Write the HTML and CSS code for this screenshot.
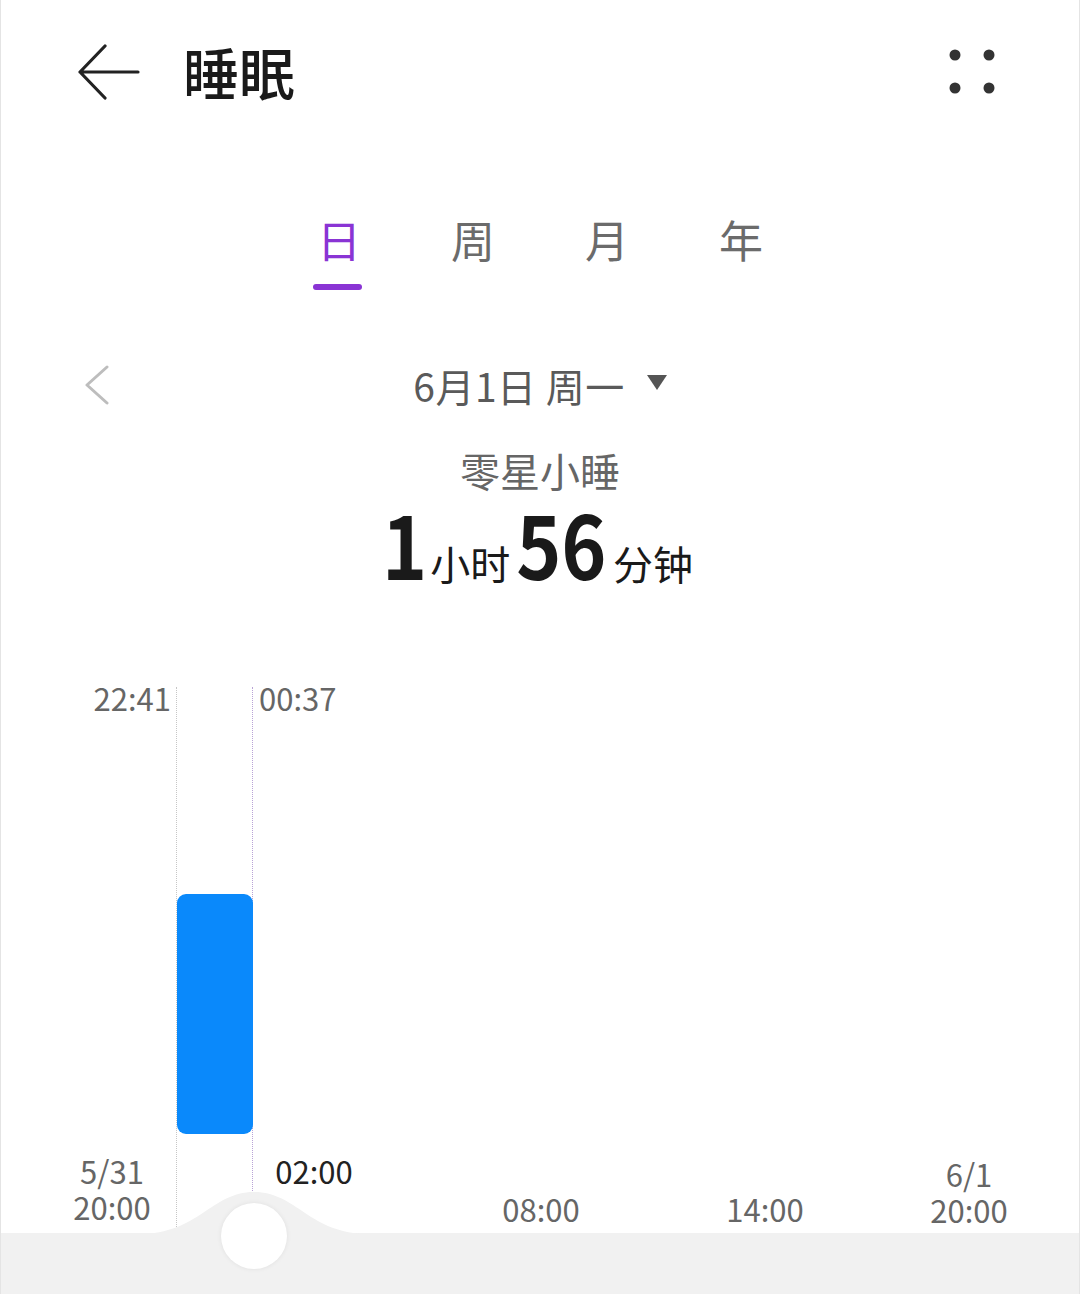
FILE: index.html
```html
<!DOCTYPE html>
<html lang="zh-CN">

<head>
    <meta charset="UTF-8">
    <meta name="viewport" content="width=device-width, initial-scale=1.0">
    <title>睡眠</title>
    <link rel="stylesheet" href="styles.css">
</head>

<body>
    <div class="screen">
        <header class="topbar">
            <svg class="back" width="62" height="56" viewBox="0 0 62 56">
                <path d="M27 2 L2 28 L27 54 M2 28 H60" fill="none" stroke="#222" stroke-width="3.2" stroke-linecap="round" stroke-linejoin="round"/>
            </svg>
            <h1 class="title">睡眠</h1>
            <svg class="more" width="46" height="46" viewBox="0 0 46 46">
                <circle cx="6" cy="6" r="5.5" fill="#333"/>
                <circle cx="40" cy="6" r="5.5" fill="#333"/>
                <circle cx="6" cy="39" r="5.5" fill="#333"/>
                <circle cx="40" cy="39" r="5.5" fill="#333"/>
            </svg>
        </header>

        <nav class="tabs">
            <div class="tab active">日<span class="underline"></span></div>
            <div class="tab">周</div>
            <div class="tab">月</div>
            <div class="tab">年</div>
        </nav>

        <div class="date-row">
            <svg class="prev" width="26" height="40" viewBox="0 0 26 40">
                <path d="M23 2 L3 20 L23 38" fill="none" stroke="#bdbdbd" stroke-width="3" stroke-linecap="round" stroke-linejoin="round"/>
            </svg>
            <div class="date">6月1日 周一<span class="caret"></span></div>
        </div>

        <div class="summary">
            <div class="kind">零星小睡</div>
            <div class="total">
                <span class="num">1</span><span class="unit">小时</span><span class="num">56</span><span class="unit">分钟</span>
            </div>
        </div>

        <div class="chart">
            <div class="vline start"></div>
            <div class="vline end"></div>
            <div class="mark start-label">22:41</div>
            <div class="mark end-label">00:37</div>
            <div class="nap-bar"></div>

            <div class="axis a1"><div>5/31</div><div>20:00</div></div>
            <div class="axis a2"><div>02:00</div></div>
            <div class="axis a3"><div>08:00</div></div>
            <div class="axis a4"><div>14:00</div></div>
            <div class="axis a5"><div>6/1</div><div>20:00</div></div>
        </div>

        <div class="scrubber">
            <svg class="bump" width="240" height="44" viewBox="0 0 240 44">
                <path d="M0 44 C60 44 72 2 115 2 C158 2 170 44 230 44 Z" fill="#f1f1f1"/>
            </svg>
            <div class="knob"></div>
        </div>
    </div>
</body>

</html>
```

FILE: styles.css
```css
body {
    margin: 0;
    background: #fff;
    font-family: "Noto Sans CJK SC", "Noto Sans", sans-serif;
    color: #222;
}

.screen {
    width: 1080px;
    height: 1294px;
    box-sizing: border-box;
    border-left: 1px solid #e4e4e4;
    border-right: 1px solid #e4e4e4;
    overflow: hidden;
    display: flex;
    flex-direction: column;
}

/* top bar */
.topbar {
    height: 145px;
    flex-shrink: 0;
    display: flex;
    align-items: center;
    padding: 0 84px 0 77px;
}

.back {
    margin-top: -2px;
}

.title {
    margin: 0 0 0 43px;
    font-size: 56px;
    font-weight: 500;
    color: #1a1a1a;
    flex: 1;
    line-height: 1;
    margin-top: -4px;
}

.more {
    margin-top: -2px;
}

/* day / week / month / year */
.tabs {
    display: flex;
    justify-content: center;
    margin-top: 68px;
    flex-shrink: 0;
}

.tab {
    width: 134px;
    text-align: center;
    font-size: 44px;
    line-height: 52px;
    color: #6b6b6b;
    position: relative;
    height: 77px;
}

.tab.active {
    color: #8a34d4;
}

.underline {
    position: absolute;
    left: 41px;
    top: 71px;
    width: 49px;
    height: 6px;
    border-radius: 3px;
    background: #8a34d4;
}

/* date selector */
.date-row {
    height: 60px;
    margin-top: 65px;
    flex-shrink: 0;
    display: flex;
    align-items: center;
    padding-left: 83px;
}

.date {
    flex: 1;
    display: flex;
    align-items: center;
    justify-content: center;
    font-size: 39px;
    color: #5a5a5a;
    margin-right: 109px;
    letter-spacing: 0.5px;
}

.caret {
    width: 0;
    height: 0;
    margin-left: 22px;
    margin-top: -6px;
    border-left: 10px solid transparent;
    border-right: 10px solid transparent;
    border-top: 15px solid #555;
}

/* summary */
.summary {
    text-align: center;
    margin-top: 31px;
    flex-shrink: 0;
}

.kind {
    font-size: 40px;
    line-height: 48px;
    color: #666;
}

.total {
    display: flex;
    justify-content: center;
    align-items: baseline;
    height: 96px;
    color: #1a1a1a;
}

.num {
    font-size: 87px;
    line-height: 96px;
    font-weight: 700;
    display: inline-block;
    transform: scaleX(0.88);
    margin: 0 -4px;
}

.unit {
    font-size: 40px;
    line-height: 48px;
    margin: 0 4px;
}

/* chart canvas */
.chart {
    position: relative;
    height: 554px;
    margin-top: 89px;
    flex-shrink: 0;
}

.vline {
    position: absolute;
    top: 8px;
    bottom: 0;
    border-left: 1px dotted #c6c6c6;
}

.vline.start {
    left: 175px;
}

.vline.end {
    left: 251px;
    border-left-color: #b9a3d6;
}

.mark,
.axis {
    position: absolute;
    font-size: 31px;
    line-height: 36px;
    color: #666;
    white-space: nowrap;
}

.axis div {
    height: 36px;
}

.start-label {
    top: 1px;
    right: 908px;
}

.end-label {
    top: 1px;
    left: 258px;
}

.nap-bar {
    position: absolute;
    left: 176px;
    top: 215px;
    width: 76px;
    height: 240px;
    border-radius: 9px;
    background: #0a89fb;
}

.axis {
    text-align: center;
    transform: translateX(-50%);
}

.a1 {
    left: 111px;
    top: 474px;
}

.a2 {
    left: 313px;
    top: 474px;
    color: #222;
}

.a3 {
    left: 540px;
    top: 512px;
}

.a4 {
    left: 764px;
    top: 512px;
}

.a5 {
    left: 968px;
    top: 477px;
}

/* bottom scrubber */
.scrubber {
    position: relative;
    flex: 1;
    background: #f1f1f1;
}

.bump {
    position: absolute;
    left: 138px;
    top: -43px;
}

.knob {
    position: absolute;
    left: 220px;
    top: -30px;
    width: 66px;
    height: 66px;
    border-radius: 50%;
    background: #fff;
    box-shadow: 0 0 5px rgba(0, 0, 0, 0.07);
}
```
